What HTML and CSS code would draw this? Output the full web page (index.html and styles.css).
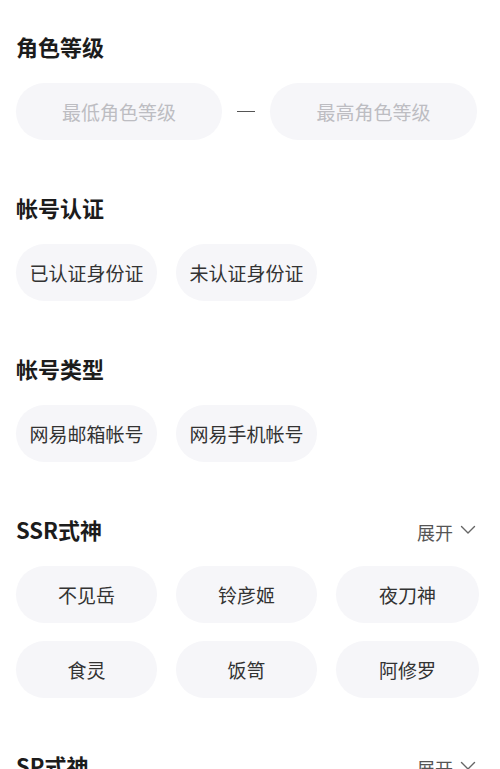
FILE: index.html
```html
<!DOCTYPE html>
<html lang="zh">
<head>
<meta charset="utf-8">
<link rel="stylesheet" href="styles.css">
</head>
<body>
<div class="page">
  <section class="section first">
    <div class="head"><h2 class="title">角色等级</h2></div>
    <div class="range">
      <div class="pill placeholder">最低角色等级</div>
      <div class="dash"><span></span></div>
      <div class="pill placeholder">最高角色等级</div>
    </div>
  </section>

  <section class="section">
    <div class="head"><h2 class="title">帐号认证</h2></div>
    <div class="chips">
      <div class="pill">已认证身份证</div>
      <div class="pill">未认证身份证</div>
    </div>
  </section>

  <section class="section">
    <div class="head"><h2 class="title">帐号类型</h2></div>
    <div class="chips">
      <div class="pill">网易邮箱帐号</div>
      <div class="pill">网易手机帐号</div>
    </div>
  </section>

  <section class="section">
    <div class="head">
      <h2 class="title">SSR式神</h2>
      <div class="more">展开<svg class="chev" viewBox="0 0 16 10" width="16" height="10"><path d="M1.5 1.5 L8 8 L14.5 1.5" fill="none" stroke="#666" stroke-width="1.4" stroke-linecap="round" stroke-linejoin="round"/></svg></div>
    </div>
    <div class="grid">
      <div class="pill">不见岳</div>
      <div class="pill">铃彦姬</div>
      <div class="pill">夜刀神</div>
      <div class="pill">食灵</div>
      <div class="pill">饭笥</div>
      <div class="pill">阿修罗</div>
    </div>
  </section>

  <section class="section">
    <div class="head">
      <h2 class="title">SP式神</h2>
      <div class="more">展开<svg class="chev" viewBox="0 0 16 10" width="16" height="10"><path d="M1.5 1.5 L8 8 L14.5 1.5" fill="none" stroke="#666" stroke-width="1.4" stroke-linecap="round" stroke-linejoin="round"/></svg></div>
    </div>
  </section>
</div>
</body>
</html>
```

FILE: styles.css
```css
* { box-sizing: border-box; }
html, body {
  margin: 0;
  padding: 0;
  background: #ffffff;
}
body {
  font-family: "Noto Sans CJK SC", "Noto Sans", sans-serif;
  color: #222;
  overflow: hidden;
}
.page {
  padding: 30px 22px 0 16px;
}
.section {
  margin-top: 51px;
}
.section.first {
  margin-top: 0;
}
.head {
  display: flex;
  align-items: center;
  justify-content: space-between;
  height: 32px;
  margin-bottom: 21px;
}
.title {
  margin: 0;
  font-size: 22px;
  font-weight: 700;
  line-height: 32px;
  color: #1c1c1c;
}
.more {
  display: flex;
  align-items: center;
  font-size: 18px;
  color: #555;
  margin-right: 2px;
  margin-top: 5px;
}
.chev {
  margin-left: 7px;
  margin-top: -4px;
}
.pill {
  height: 57px;
  border-radius: 29px;
  background: #f6f6f9;
  display: flex;
  align-items: center;
  justify-content: center;
  font-size: 19px;
  color: #333;
  white-space: nowrap;
}
.placeholder {
  color: #bdbdc2;
}
.range {
  display: grid;
  grid-template-columns: 206px 48px 207px;
}
.dash {
  display: flex;
  align-items: center;
  justify-content: center;
}
.dash span {
  display: block;
  width: 18px;
  height: 1.6px;
  background: #555;
}
.chips {
  display: flex;
  gap: 19px;
}
.chips .pill {
  width: 141px;
}
.grid {
  display: grid;
  grid-template-columns: 141px 141px 143px;
  column-gap: 19px;
  row-gap: 18px;
}
```
